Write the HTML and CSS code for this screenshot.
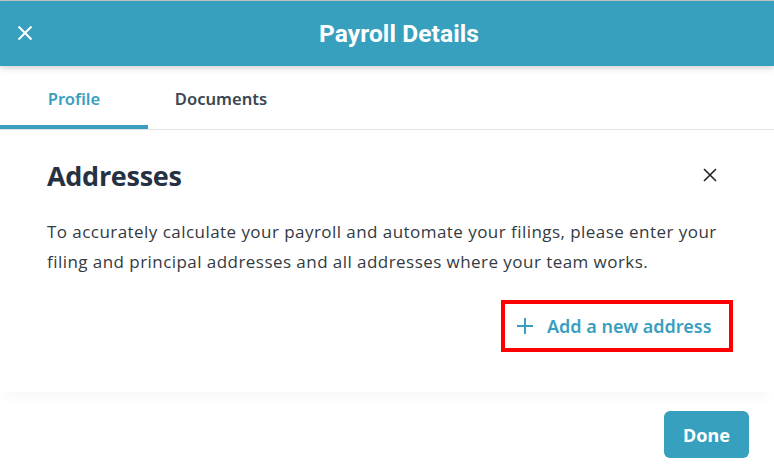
FILE: index.html
```html
<!DOCTYPE html>
<html>
<head>
<meta charset="utf-8">
<link rel="stylesheet" href="styles.css">
</head>
<body>
<div class="page">
  <header class="topbar">
    <button class="top-close" aria-label="Close">
      <svg width="16" height="16" viewBox="0 0 16 16"><path d="M1.5 1.5 L14.5 14.5 M14.5 1.5 L1.5 14.5" stroke="#fff" stroke-width="2" fill="none"/></svg>
    </button>
    <h1 class="title">Payroll Details</h1>
  </header>
  <nav class="tabs">
    <div class="tab active">Profile</div>
    <div class="tab">Documents</div>
  </nav>
  <main class="content">
    <div class="head-row">
      <h2 class="heading">Addresses</h2>
      <button class="card-close" aria-label="Close">
        <svg width="16" height="16" viewBox="0 0 16 16"><path d="M2 2 L14 14 M14 2 L2 14" stroke="#222" stroke-width="1.6" fill="none"/></svg>
      </button>
    </div>
    <p class="desc">To accurately calculate your payroll and automate your filings, please enter your filing and principal addresses and all addresses where your team works.</p>
    <div class="add-row">
      <div class="add-box">
        <svg class="plus" width="18" height="18" viewBox="0 0 18 18"><path d="M9 1 V17 M1 9 H17" stroke="#3a9fbf" stroke-width="2" fill="none"/></svg>
        <span class="add-text">Add a new address</span>
      </div>
    </div>
  </main>
  <footer class="footer">
    <button class="done">Done</button>
  </footer>
</div>
</body>
</html>
```
FILE: styles.css
```css
* { box-sizing: border-box; }
html, body { margin: 0; padding: 0; background: #fff; }
body { width: 774px; height: 476px; overflow: hidden; font-family: "Open Sans", "Noto Sans", sans-serif; }
.page { display: flex; flex-direction: column; height: 476px; border-top: 1px solid #c8c8c8; }
.topbar { position: relative; z-index: 2; height: 65px; background: #38a0bf; display: flex; align-items: center; justify-content: center; box-shadow: 0 2px 6px rgba(0,0,0,0.18); }
.top-close { position: absolute; left: 17px; top: 24px; background: none; border: 0; padding: 0; width: 16px; height: 16px; display: flex; }
.title { margin: 0 0 0 24px; color: #fff; font-family: Roboto, sans-serif; font-weight: 700; font-size: 24.5px; letter-spacing: 0.1px; }
.tabs { display: flex; height: 64px; border-bottom: 1px solid #e2e2e2; }
.tab { width: 148px; display: flex; align-items: center; justify-content: center; font-family: "Noto Sans", sans-serif; font-weight: 600; font-size: 16.6px; color: #3b4650; padding-top: 2px; }
.tab + .tab { width: 146px; }
.tab.active { color: #3a9fbf; border-bottom: 4px solid #3a9fbf; padding-top: 6px; }
.content { flex: 1; padding: 28px 54px 0 47px; box-shadow: 0 10px 14px -6px rgba(0,0,0,0.04); position: relative; z-index: 1; }
.head-row { display: flex; align-items: center; justify-content: space-between; height: 34px; }
.heading { margin: 0; font-family: "Open Sans", sans-serif; font-weight: 700; font-size: 27px; color: #263143; letter-spacing: -0.3px; }
.card-close { background: none; border: 0; padding: 0; width: 16px; height: 16px; display: flex; margin-right: 2px; }
.desc { margin: 25px 0 0; font-size: 17px; letter-spacing: 0.45px; line-height: 30px; color: #333a42; }
.add-row { display: flex; justify-content: flex-end; margin-top: 23px; margin-right: -13px; }
.add-box { display: flex; align-items: center; gap: 13px; width: 232px; height: 52px; border: 4px solid #f00; padding-left: 11px; }
.add-text { font-family: "Noto Sans", sans-serif; font-weight: 600; font-size: 18px; color: #3a9fbf; }
.footer { height: 84px; display: flex; justify-content: flex-end; align-items: flex-start; padding: 19px 25px 0 0; }
.done { width: 85px; height: 47px; background: #38a0bf; color: #fff; border: 0; border-radius: 6px; font-family: "Noto Sans", sans-serif; font-weight: 700; font-size: 18px; }
```
